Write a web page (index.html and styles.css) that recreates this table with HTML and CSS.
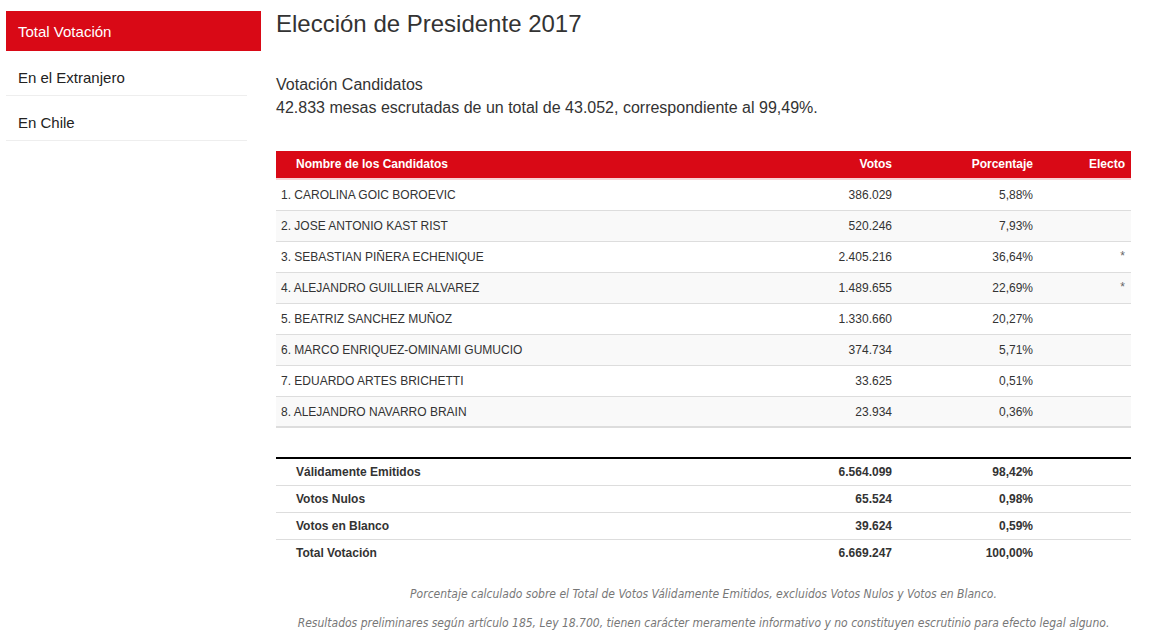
FILE: index.html
```html
<!DOCTYPE html>
<html lang="es">
<head>
<meta charset="utf-8">
<title>Elección de Presidente 2017</title>
<link rel="stylesheet" href="styles.css">
</head>
<body>
<div class="page">
  <nav class="sidebar">
    <a class="nav-item active" href="#">Total Votación</a>
    <a class="nav-item" href="#">En el Extranjero</a>
    <a class="nav-item" href="#">En Chile</a>
  </nav>
  <main class="main">
    <h3 class="title">Elección de Presidente 2017</h3>
    <div class="subtitle">
      <div>Votación Candidatos</div>
      <div>42.833 mesas escrutadas de un total de 43.052, correspondiente al 99,49%.</div>
    </div>
    <table class="results">
      <colgroup>
        <col>
        <col class="c-votos">
        <col class="c-pct">
        <col class="c-electo">
      </colgroup>
      <thead>
        <tr>
          <th class="name-h">Nombre de los Candidatos</th>
          <th class="num">Votos</th>
          <th class="num">Porcentaje</th>
          <th class="num">Electo</th>
        </tr>
      </thead>
      <tbody>
        <tr><td>1. CAROLINA GOIC BOROEVIC</td><td class="num">386.029</td><td class="num">5,88%</td><td class="num star"></td></tr>
        <tr><td>2. JOSE ANTONIO KAST RIST</td><td class="num">520.246</td><td class="num">7,93%</td><td class="num star"></td></tr>
        <tr><td>3. SEBASTIAN PIÑERA ECHENIQUE</td><td class="num">2.405.216</td><td class="num">36,64%</td><td class="num star">*</td></tr>
        <tr><td>4. ALEJANDRO GUILLIER ALVAREZ</td><td class="num">1.489.655</td><td class="num">22,69%</td><td class="num star">*</td></tr>
        <tr><td>5. BEATRIZ SANCHEZ MUÑOZ</td><td class="num">1.330.660</td><td class="num">20,27%</td><td class="num star"></td></tr>
        <tr><td>6. MARCO ENRIQUEZ-OMINAMI GUMUCIO</td><td class="num">374.734</td><td class="num">5,71%</td><td class="num star"></td></tr>
        <tr><td>7. EDUARDO ARTES BRICHETTI</td><td class="num">33.625</td><td class="num">0,51%</td><td class="num star"></td></tr>
        <tr><td>8. ALEJANDRO NAVARRO BRAIN</td><td class="num">23.934</td><td class="num">0,36%</td><td class="num star"></td></tr>
      </tbody>
    </table>
    <table class="summary">
      <colgroup>
        <col>
        <col class="c-votos">
        <col class="c-pct">
        <col class="c-electo">
      </colgroup>
      <tbody>
        <tr><td class="label">Válidamente Emitidos</td><td class="num">6.564.099</td><td class="num">98,42%</td><td></td></tr>
        <tr><td class="label">Votos Nulos</td><td class="num">65.524</td><td class="num">0,98%</td><td></td></tr>
        <tr><td class="label">Votos en Blanco</td><td class="num">39.624</td><td class="num">0,59%</td><td></td></tr>
        <tr><td class="label">Total Votación</td><td class="num">6.669.247</td><td class="num">100,00%</td><td></td></tr>
      </tbody>
    </table>
    <div class="notes">
      <p>Porcentaje calculado sobre el Total de Votos Válidamente Emitidos, excluidos Votos Nulos y Votos en Blanco.</p>
      <p>Resultados preliminares según artículo 185, Ley 18.700, tienen carácter meramente informativo y no constituyen escrutinio para efecto legal alguno.</p>
    </div>
  </main>
</div>
</body>
</html>
```

FILE: styles.css
```css
* { box-sizing: border-box; }

html, body {
  margin: 0;
  padding: 0;
  background: #fff;
}

body {
  font-family: "Liberation Sans", Arial, sans-serif;
  font-size: 14px;
  color: #333;
}

.page {
  display: flex;
  gap: 15px;
  padding: 11px 0 0 6px;
}

.sidebar {
  width: 255px;
  flex: none;
  display: flex;
  flex-direction: column;
}

.nav-item {
  display: block;
  color: #222;
  text-decoration: none;
  font-size: 15px;
  line-height: 20px;
  padding: 17px 12px 7px;
  margin: 0 14px 0 0;
  border-bottom: 1px solid #eeeeee;
}

.nav-item.active {
  background: #d90916;
  color: #fff;
  padding: 11px 12px 9px;
  margin: 0;
  border-bottom: none;
}

.main {
  width: 855px;
  flex: none;
}

.title {
  margin: 0;
  font-size: 24px;
  font-weight: normal;
  line-height: 26px;
  color: #333;
}

.subtitle {
  margin-top: 36px;
  font-size: 16px;
  line-height: 23px;
  color: #333;
}

.results,
.summary {
  width: 100%;
  border-collapse: collapse;
  table-layout: fixed;
  font-size: 12px;
}

.results {
  margin-top: 32px;
}

.c-votos { width: 150px; }
.c-pct { width: 141px; }
.c-electo { width: 92px; }

.results th {
  background: #d90916;
  color: #fff;
  font-weight: bold;
  height: 28px;
  padding: 0 6px 2px 5px;
  text-align: left;
  border-bottom: 2px solid #f8d3d5;
}

.results th.name-h {
  padding-left: 20px;
}

.results td {
  height: 31px;
  padding: 1px 6px 0 5px;
  border-bottom: 1px solid #dddddd;
  color: #333;
}

.results tbody tr:nth-child(even) td {
  background: #f9f9f9;
}

.results tbody tr:last-child td {
  border-bottom: 2px solid #dddddd;
}

.results .num,
.summary .num {
  text-align: right;
}

.results .star {
  color: #666;
  vertical-align: middle;
  padding-bottom: 3px;
}

.summary {
  margin-top: 29px;
  border-top: 2px solid #000;
}

.summary td {
  height: 27px;
  padding: 0 6px 0 20px;
  font-weight: bold;
  color: #333;
  border-bottom: 1px solid #dddddd;
}

.summary tr:last-child td {
  border-bottom: none;
}

.notes {
  margin-top: 20px;
  text-align: center;
  font-family: "Liberation Sans Narrow", "DejaVu Sans Condensed", "Open Sans", sans-serif;
  font-style: italic;
  font-size: 12px;
  color: #777;
}

.notes p {
  margin: 0 0 13px;
  line-height: 16px;
}
```
